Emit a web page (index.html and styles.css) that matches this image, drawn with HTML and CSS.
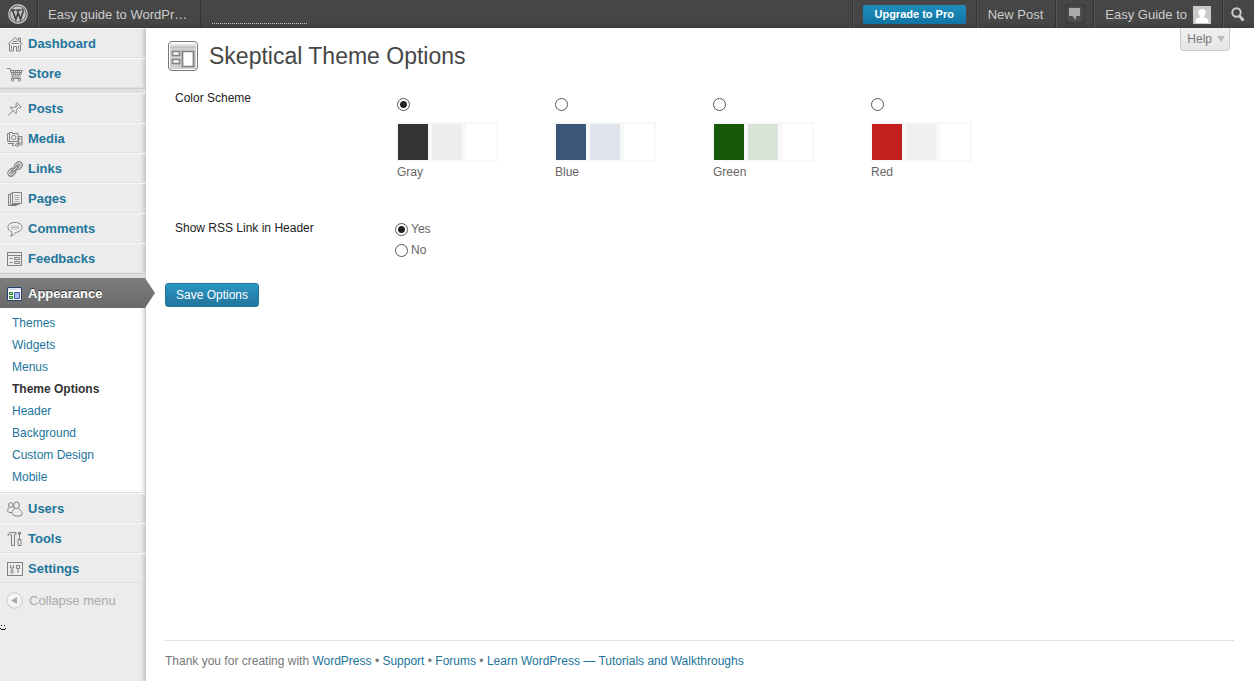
FILE: index.html
```html
<!DOCTYPE html>
<html lang="en">
<head>
<meta charset="utf-8">
<title>Skeptical Theme Options</title>
<link rel="stylesheet" href="styles.css">
</head>
<body>
<header class="topbar">
  <a class="bar-item bar-logo" href="#" aria-label="WordPress">
    <svg width="20" height="20" viewBox="0 0 20 20"><circle cx="10" cy="10" r="9.2" fill="none" stroke="#c4c4c4" stroke-width="1.4"/><circle cx="10" cy="10" r="7.8" fill="#c4c4c4"/><path d="M3 6.2h4.4M8.2 6.2h4.6M4.6 6.4l3.2 9 2.2-6.2M9.3 6.4l3.3 9 2.4-7.3c.5-1.8-.9-2.2-.7-3.6" fill="none" stroke="#464646" stroke-width="1.7"/></svg>
  </a>
  <a class="bar-item bar-site" href="#">Easy guide to WordPr…</a>
  <span class="bar-stats"></span>
  <div class="bar-item bar-upgrade"><a class="upgrade" href="#">Upgrade to Pro</a></div>
  <a class="bar-item bar-new" href="#">New Post</a>
  <button class="bar-item bar-notes" type="button" aria-label="Notifications">
    <span class="note-box"><svg width="11" height="12" viewBox="0 0 11 12"><path d="M0 0h11v8H7v4L3.500 8H0z" fill="#aaa"/></svg></span>
  </button>
  <a class="bar-item bar-user" href="#">Easy Guide to
    <svg width="18" height="18" viewBox="0 0 18 18"><path d="M0 0h18v18H0z" fill="#c9c9c9"/><path d="M9 3c2.600 0 3.800 1.700 3.600 3.800-.1 1.600-.8 2.700-1.600 3.400v1c2.200.7 4.500 1.400 4.500 4.200V17h-13v-1.600c0-2.800 2.300-3.500 4.500-4.200v-1c-.8-.7-1.500-1.800-1.600-3.400C5.200 4.700 6.400 3 9 3z" fill="#fff"/></svg>
  </a>
  <button class="bar-item bar-search" type="button" aria-label="Search">
    <svg width="14" height="15" viewBox="0 0 14 15"><circle cx="5.500" cy="5.500" r="4.200" fill="none" stroke="#ccc" stroke-width="2"/><path d="M8.500 9l4 4.500" stroke="#ccc" stroke-width="2.800"/></svg>
  </button>
</header>

<div class="layout">
  <nav class="sidebar" aria-label="Main menu">
    <a class="item" href="#"><svg class="icon" viewBox="0 0 16 16"><path d="M.8 8.500L8 1.500l7.200 7M11.500 4.500v-2.500h2v4.500M2.500 8v7h4v-4.500h3V15h4V8M4.500 7.500h7M6 5.500h4M4.500 9.500v4M11.500 9.500v4"/></svg>Dashboard</a>
    <a class="item" href="#"><svg class="icon" viewBox="0 0 16 16"><path d="M0 2.500h3l2.500 8.500h8M3.500 4.500h11.800L13.500 9H5M6.500 5v4M8.500 5v4M10.500 5v4M12.500 5v4M4.500 6.500h10M5.500 11l-1 1.500h9"/><circle cx="5.500" cy="14" r="1.200"/><circle cx="12.500" cy="14" r="1.200"/></svg>Store</a>
    <div class="sep"></div>
    <a class="item" href="#"><svg class="icon" viewBox="0 0 16 16"><path d="M1.500 14.500l4.500-5M3 6.500l6 6c.8-1.300.6-2.400 0-3.400l2.500-2.500c1.200.5 2.200.3 2.800-.5l-4.500-4.500c-.8.700-1 1.700-.5 2.800L6.500 7C5.500 6 4.200 5.900 3 6.500zM8.500 6.500l3-3"/></svg>Posts</a>
    <a class="item" href="#"><svg class="icon" viewBox="0 0 16 16"><path d="M.5 2.500h2v-1h3v1h5.500v8H.5zM2.500 2.500v8M11.500 5.500h3.500v7M11.500 13.500V5.500M11.500 8h3"/><circle cx="6.700" cy="6.500" r="2.200"/><circle cx="10" cy="14" r="1.400"/><circle cx="13.600" cy="13" r="1.400"/><path d="M1 12.500h6M5.500 12.500v2h2"/></svg>Media</a>
    <a class="item" href="#"><svg class="icon" viewBox="0 0 16 16"><g transform="rotate(-45 8 8)" stroke-width="1.200"><rect x="-.8" y="4.800" width="8.400" height="6.400" rx="3.200"/><rect x="1.500" y="7" width="3.800" height="2" rx="1"/><rect x="8.400" y="4.800" width="8.400" height="6.400" rx="3.200"/><rect x="10.700" y="7" width="3.800" height="2" rx="1"/><path d="M4.500 7h7v2h-7z" fill="#ececec"/></g></svg>Links</a>
    <a class="item" href="#"><svg class="icon" viewBox="0 0 16 16"><path d="M5.500 1.500h9v11h-9zM5.500 2.500h-2v11h8.500v-1M3.500 3.500h-2v11h8v-1"/><path d="M7.500 4.500h5M7.500 6.500h5M7.500 8.500h5M7.500 10.500h5" stroke="#aaa"/></svg>Pages</a>
    <a class="item" href="#"><svg class="icon" viewBox="0 0 16 16"><path d="M8 1.500c4 0 7 2 7 4.800s-3 5-6.500 5c-1 2-2.500 3.500-5 3.700 1.500-1.500 1.700-2.500 1.500-4.200-2.500-.8-4-2.300-4-4.500 0-3 3-4.800 7-4.800z" fill="#f5f5f5"/><path d="M4 5h8M3.500 6.500h9M4 8h8" stroke="#bbb"/></svg>Comments</a>
    <a class="item" href="#"><svg class="icon" viewBox="0 0 16 16"><rect x=".5" y="1.500" width="14" height="13"/><path d="M1 4.500h13M2.500 7.500h3M2.500 11.500h3M7.500 6.500h5v2h-5zM7.500 10.500h5v2h-5z"/></svg>Feedbacks</a>
    <div class="sep"></div>
    <a class="item item-current" href="#"><svg class="icon" viewBox="0 0 16 16"><path d="M.5 1.500h14v13H.5z" fill="#fff" stroke="#264074"/><path d="M1 3h13" stroke="#dce2ef" stroke-width="2"/><path d="M2 6h4v3H2zM2 10h4v3H2z" stroke="none" fill="#2f8a35"/><path d="M3 7h2v1H3zM3 11h2v1H3z" stroke="none" fill="#c6e4ba"/><path d="M7.500 6.500h5v6h-5z" fill="#a9bdf4" stroke="#4257a8"/></svg>Appearance</a>
    <ul class="submenu">
      <li><a href="#">Themes</a></li>
      <li><a href="#">Widgets</a></li>
      <li><a href="#">Menus</a></li>
      <li><a class="active" href="#">Theme Options</a></li>
      <li><a href="#">Header</a></li>
      <li><a href="#">Background</a></li>
      <li><a href="#">Custom Design</a></li>
      <li><a href="#">Mobile</a></li>
    </ul>
    <a class="item" href="#"><svg class="icon" viewBox="0 0 16 16"><circle cx="3.800" cy="4" r="2.300"/><path d="M2.500 6C-.2 8.500 0 11.500 3 11.500h2"/><ellipse cx="9.500" cy="4.300" rx="2.800" ry="3.300"/><path d="M7.500 6.500l-2-1M8 7.500c-3 2-4 4.500-2 6.500 2 1.500 7 1.500 9 0 1.200-2.500-1.500-5-4-6.500"/></svg>Users</a>
    <a class="item" href="#"><svg class="icon" viewBox="0 0 16 16"><path d="M.8 3.500c1-1.500 2-2 3.200-2h5v2H7.500v11h-3v-11c-1.500-.3-2.300 0-3.200 1zM12.500 1v7M11 8.500h3v6h-3zM11.500 3.500v-2.500M13.500 3.500V1"/></svg>Tools</a>
    <a class="item" href="#"><svg class="icon" viewBox="0 0 16 16"><rect x=".5" y="1.500" width="15" height="13"/><path d="M3.500 4v3h3V4M5 7v2.500M9.500 4.500h3v3h-3zM11 7.500V12"/><circle cx="5" cy="10.800" r="1.300"/></svg>Settings</a>
    <button class="collapse" type="button"><svg width="17" height="17" viewBox="0 0 17 17"><circle cx="8.500" cy="8.500" r="7.700" fill="#f5f5f5" stroke="#c6c6c6"/><path d="M11 5v7L5 8.500z" fill="#aaa"/></svg>Collapse menu</button>
    <svg class="smiley" width="6" height="6" viewBox="0 0 6 6"><path d="M1 0h1v1H1zM4 0h1v1H4zM0 3h1v1H0zM5 3h1v1H5zM1 4h4v1H1z" fill="#111"/></svg>
  </nav>

  <main class="content">
    <button class="help" type="button">Help <span class="caret"></span></button>
    <div class="heading">
      <svg width="32" height="32" viewBox="0 0 32 32"><defs><linearGradient id="head" x2="0" y2="1"><stop stop-color="#fff"/><stop offset="1" stop-color="#bbb"/></linearGradient></defs><rect x="1.500" y="1.500" width="29" height="29" rx="3.500" fill="#fff" stroke="#777"/><path d="M3 3h26v5H3z" fill="url(#head)"/><path d="M3 8h26v21H3z" fill="#d0d0d0"/><g fill="#fff" stroke="#808080"><path d="M5.500 11.500h7v4h-7zM5.500 19.500h7v4h-7z" stroke-width="1.500"/><path d="M15.500 11.500h11v15h-11z" stroke-width="1.700"/></g></svg>
      <h1>Skeptical Theme Options</h1>
    </div>
    <form>
      <div class="row row-scheme" role="radiogroup" aria-labelledby="scheme">
        <span class="row-label" id="scheme">Color Scheme</span>
        <div class="schemes">
          <label class="scheme"><input type="radio" name="scheme" checked><span class="swatches"><i class="gray"></i><i class="gray-light"></i><i></i></span><span class="name">Gray</span></label>
          <label class="scheme"><input type="radio" name="scheme"><span class="swatches"><i class="blue"></i><i class="blue-light"></i><i></i></span><span class="name">Blue</span></label>
          <label class="scheme"><input type="radio" name="scheme"><span class="swatches"><i class="green"></i><i class="green-light"></i><i></i></span><span class="name">Green</span></label>
          <label class="scheme"><input type="radio" name="scheme"><span class="swatches"><i class="red"></i><i class="red-light"></i><i></i></span><span class="name">Red</span></label>
        </div>
      </div>
      <div class="row row-rss" role="radiogroup" aria-labelledby="rss">
        <span class="row-label" id="rss">Show RSS Link in Header</span>
        <div class="choices">
          <label class="choice"><input type="radio" name="rss" checked>Yes</label>
          <label class="choice"><input type="radio" name="rss">No</label>
        </div>
      </div>
      <button class="save" type="button">Save Options</button>
    </form>
    <footer class="footer">Thank you for creating with <a href="#">WordPress</a> • <a href="#">Support</a> • <a href="#">Forums</a> • <a href="#">Learn WordPress — Tutorials and Walkthroughs</a></footer>
  </main>
</div>
</body>
</html>
```
FILE: styles.css
```css
* { box-sizing: border-box; }

body {
  margin: 0;
  min-height: 100vh;
  display: flex;
  flex-direction: column;
  background: #fff;
  color: #666;
  font: 12px/16px "Liberation Sans", Arial, sans-serif;
}

a { color: #21759b; text-decoration: none; }
button { border: 0; margin: 0; padding: 0; background: none; font: inherit; color: inherit; }
svg { display: block; flex: none; }

/* Top bar */
.topbar {
  display: flex;
  height: 28px;
  background: linear-gradient(#464646 80%, #3d3d3d);
  color: #ccc;
  font-size: 13px;
}
.bar-item {
  display: flex;
  align-items: center;
  color: #ccc;
  border-left: 1px solid #333;
  box-shadow: inset 1px 0 #555;
}
.bar-logo { width: 37px; padding-left: 8px; border: 0; box-shadow: none; }
.bar-site { padding: 1px 13px 0 10px; border-right: 1px solid #333; }
.bar-stats { width: 95px; height: 24px; margin: 0 auto 0 11px; border-bottom: 1px dotted #ccc; }
.bar-upgrade { padding: 0 10px; }
.upgrade {
  width: 103px;
  height: 19px;
  border-radius: 2px;
  background: linear-gradient(#1f8ebd, #0f74a4);
  color: #fff;
  font-weight: bold;
  font-size: 11px;
  line-height: 18px;
  text-align: center;
}
.bar-new { padding: 1px 12px 0 11px; }
.bar-notes { width: 38px; justify-content: center; }
.note-box {
  display: flex;
  align-items: center;
  justify-content: center;
  width: 20px;
  height: 20px;
  border-radius: 4px;
  background: #505050;
  box-shadow: inset 0 0 4px #222;
}
.bar-user { gap: 6px; padding: 1px 11px 0 11px; }
.bar-search { width: 32px; padding-left: 8px; }

.layout { flex: 1; display: flex; }

/* Sidebar */
.sidebar {
  flex: none;
  width: 146px;
  background: #ececec;
  border-right: 1px solid #ccc;
  box-shadow: inset -5px 0 4px -4px #bbb;
}
.item {
  display: flex;
  align-items: center;
  gap: 5px;
  height: 30px;
  padding: 2px 0 0 7px;
  border-top: 1px solid #f9f9f9;
  border-bottom: 1px solid #dfdfdf;
  font-size: 13px;
  font-weight: bold;
}
.icon { width: 16px; height: 16px; fill: none; stroke: #828282; }
.sep { height: 5px; background: #dfdfdf; border-top: 1px solid #ccc; }
.item-current {
  position: relative;
  border: 0;
  background: linear-gradient(#7c7c7c, #6a6a6a);
  color: #fff;
  text-shadow: 0 -1px #333;
}
.item-current::after {
  content: "";
  position: absolute;
  left: 100%;
  top: 0;
  width: 10px;
  height: 100%;
  background: inherit;
  clip-path: polygon(0 0, 100% 50%, 0 100%);
}
.submenu {
  margin: 0;
  padding: 4px 0;
  list-style: none;
  background: #fff;
  border-bottom: 1px solid #dfdfdf;
  box-shadow: inset -5px 0 4px -4px #ccc;
}
.submenu a { display: block; padding-left: 12px; line-height: 22px; }
.submenu .active { color: #333; font-weight: bold; }
.collapse {
  display: flex;
  align-items: center;
  gap: 6px;
  height: 35px;
  padding-left: 6px;
  color: #aaa;
  font-size: 13px;
}
.smiley { margin-top: 7px; }

/* Main column */
.content {
  position: relative;
  flex: 1;
  display: flex;
  flex-direction: column;
  padding: 12px 20px 12px 19px;
}
.help {
  position: absolute;
  top: 0;
  right: 24px;
  display: flex;
  align-items: center;
  gap: 5px;
  height: 23px;
  padding: 0 4px 0 6px;
  border: 1px solid #ccc;
  border-top: 0;
  border-radius: 0 0 4px 4px;
  background: linear-gradient(#f1f1f1, #e6e6e6);
  color: #777;
}
.caret { border: 4px solid transparent; border-top: 6px solid #bbb; border-bottom: 0; }
.heading { display: flex; align-items: center; gap: 10px; padding-left: 2px; }
h1 { margin: 0; color: #464646; font-size: 23px; font-weight: normal; line-height: 32px; }

.row { display: grid; grid-template-columns: 220px 1fr; padding-left: 10px; }
.row-label { color: #222; }
.row-scheme { padding-top: 18px; }
.row-rss { padding-top: 40px; }
.schemes { display: flex; flex-wrap: wrap; padding: 8px 0 0 1px; }
.scheme { width: 158px; }
.scheme .name { display: block; padding-left: 1px; margin-top: 2px; }
.swatches { display: flex; }
.swatches i { width: 34px; height: 40px; border: 2px solid #f8f8f8; background-clip: padding-box; }
.swatches .gray { background-color: #333; }
.swatches .gray-light { background-color: #eee; }
.swatches .blue { background-color: #3b5679; }
.swatches .blue-light { background-color: #dfe4ec; }
.swatches .green { background-color: #165a09; }
.swatches .green-light { background-color: #d9e4d8; }
.swatches .red { background-color: #c41f1f; }
.swatches .red-light { background-color: #f0f0f0; }

input[type="radio"] {
  appearance: none;
  flex: none;
  width: 13px;
  height: 13px;
  margin: 0;
  border: 1px solid #555;
  border-radius: 50%;
  background: #fff;
}
input[type="radio"]:checked { background: radial-gradient(circle, #222 3px, #fff 4px); }
.scheme input[type="radio"] { display: block; margin: 0 1px 11px; }
.choices { display: flex; flex-direction: column; gap: 5px; padding-top: 1px; }
.choice { display: flex; align-items: center; gap: 3px; }
.save {
  height: 24px;
  margin-top: 25px;
  padding: 0 10px;
  border: 1px solid #21759b;
  border-radius: 3px;
  background: linear-gradient(#2a95c5, #21759b);
  color: #fff;
}
.footer { margin-top: auto; padding-top: 12px; border-top: 1px solid #dfdfdf; color: #777; }
```
